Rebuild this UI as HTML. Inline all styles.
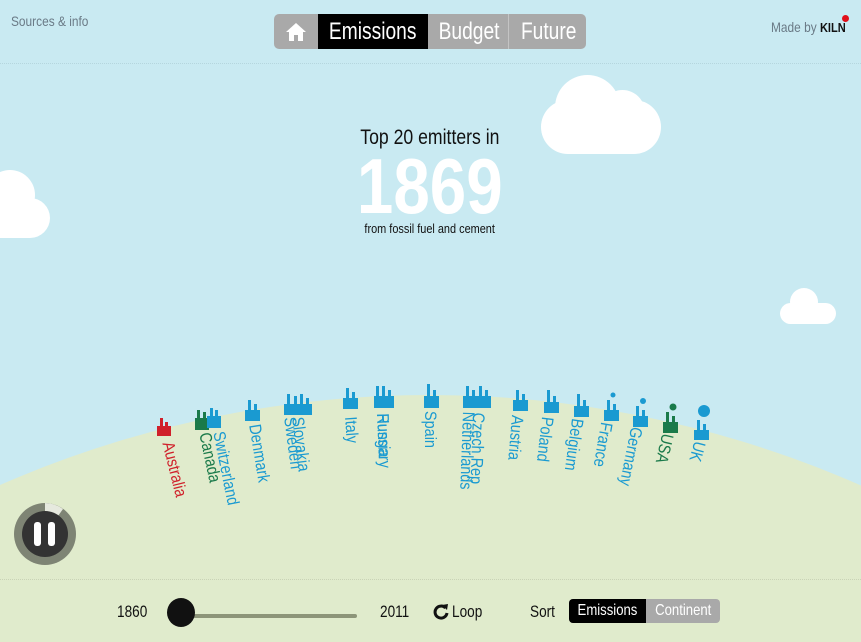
<!DOCTYPE html>
<html style="width:861px;height:642px;overflow:hidden"><head><meta charset="utf-8"><style>
*{margin:0;padding:0;box-sizing:border-box}
body{width:861px;height:642px;overflow:hidden;background:#c9eaf2;position:relative;font-family:"Liberation Sans",sans-serif}
.abs{position:absolute}
.clip{position:absolute;left:0;top:0;width:861px;height:642px;overflow:hidden}
.ground{position:absolute;left:-642px;top:395px;width:2144px;height:2144px;border-radius:50%;background:#e0ebcc}
.nav{position:absolute;left:274px;top:14px;width:312px;height:35px;background:#a9a9a9;border-radius:5px;overflow:hidden;font-size:24px;color:#fff}
.nav div{position:absolute;top:0;height:35px;line-height:35px;text-align:center}
.n{display:inline-block;transform:scaleX(0.8)}
.lab{position:absolute;transform-origin:0 0;font-size:17px;white-space:nowrap;color:#1a9ad1;line-height:17px}
.cloud{position:absolute;background:#fff;border-radius:50%}
</style></head><body>
<div class="clip"><div class="ground"></div></div>
<div class="abs" style="left:0;top:63px;width:861px;border-top:1px dotted #b5d6de"></div>
<div class="abs" style="left:0;top:579px;width:861px;border-top:1px dotted #c9d3b6"></div>
<div class="abs" style="left:0;top:580px;width:861px;height:62px;background:#e0ebcc"></div>
<div class="abs" style="left:11px;top:13px;font-size:14px;color:#6a7a86;transform:scaleX(0.85);transform-origin:0 0">Sources &amp; info</div>
<div class="abs" style="left:771px;top:19px;font-size:14px;color:#6a7a86;transform:scaleX(0.85);transform-origin:0 0">Made by <b style="color:#111;font-size:13px">KILN</b></div>
<div class="abs" style="left:842px;top:15px;width:7px;height:7px;border-radius:50%;background:#e0101a"></div>
<div class="nav">
 <div style="left:0;width:44px"><svg width="22" height="20" viewBox="0 0 22 20" style="margin-top:8px"><path d="M11 1 L1 10 L4 10 L4 19 L9 19 L9 13 L13 13 L13 19 L18 19 L18 10 L21 10 Z" fill="#fff"/></svg></div>
 <div style="left:44px;width:110px;background:#000"><span class="n">Emissions</span></div>
 <div style="left:156px;width:79px;border-right:1px solid #c4c4c4"><span class="n">Budget</span></div>
 <div style="left:237px;width:75px"><span class="n">Future</span></div>
</div>
<div class="cloud" style="left:541px;top:100px;width:120px;height:54px;border-radius:27px"></div>
<div class="cloud" style="left:555px;top:75px;width:65px;height:65px"></div>
<div class="cloud" style="left:600px;top:90px;width:45px;height:45px"></div>
<div class="cloud" style="left:-30px;top:198px;width:80px;height:40px;border-radius:20px"></div>
<div class="cloud" style="left:-15px;top:170px;width:50px;height:50px"></div>
<div class="cloud" style="left:780px;top:303px;width:56px;height:21px;border-radius:11px"></div>
<div class="cloud" style="left:790px;top:288px;width:28px;height:28px"></div>
<div class="abs" style="left:330px;width:200px;top:126px;text-align:center;font-size:21px;color:#111"><span class="n" style="transform:scaleX(0.84)">Top 20 emitters in</span></div>
<div class="abs" style="left:280px;width:300px;top:144px;text-align:center;font-size:78px;font-weight:bold;color:#fff;line-height:84px"><span class="n" style="transform:scaleX(0.84)">1869</span></div>
<div class="abs" style="left:330px;width:200px;top:221px;text-align:center;font-size:13px;color:#111"><span class="n" style="transform:scaleX(0.84)">from fossil fuel and cement</span></div>
<svg class="abs" style="left:0;top:0" width="861" height="642">
<g fill="#1a9ad1">
<g fill="#d0202a"><rect x="157" y="426" width="14" height="10"/><rect x="160" y="418" width="3" height="10"/><rect x="165" y="422" width="3" height="6"/></g>
<g fill="#1a7a4a"><rect x="195" y="418" width="14" height="12"/><rect x="197" y="410" width="3" height="10"/><rect x="203" y="412" width="3" height="8"/></g>
<rect x="207" y="416" width="14" height="12"/><rect x="210" y="408" width="3" height="10"/><rect x="215" y="410" width="3" height="8"/>
<rect x="245" y="410" width="15" height="11"/><rect x="248" y="400" width="3" height="12"/><rect x="254" y="404" width="3" height="8"/>
<rect x="284" y="404" width="28" height="11"/><rect x="287" y="394" width="3" height="12"/><rect x="294" y="396" width="3" height="10"/><rect x="300" y="394" width="3" height="12"/><rect x="306" y="398" width="3" height="8"/>
<rect x="343" y="398" width="15" height="11"/><rect x="346" y="388" width="3" height="12"/><rect x="352" y="392" width="3" height="8"/>
<rect x="374" y="396" width="20" height="12"/><rect x="376" y="386" width="3" height="12"/><rect x="382" y="386" width="3" height="12"/><rect x="388" y="390" width="3" height="8"/>
<rect x="424" y="396" width="15" height="12"/><rect x="427" y="384" width="3" height="14"/><rect x="433" y="390" width="3" height="8"/>
<rect x="463" y="396" width="28" height="12"/><rect x="466" y="386" width="3" height="12"/><rect x="472" y="390" width="3" height="8"/><rect x="479" y="386" width="3" height="12"/><rect x="485" y="390" width="3" height="8"/>
<rect x="513" y="400" width="15" height="11"/><rect x="516" y="390" width="3" height="12"/><rect x="522" y="394" width="3" height="8"/>
<rect x="544" y="402" width="15" height="11"/><rect x="547" y="390" width="3" height="14"/><rect x="553" y="396" width="3" height="8"/>
<rect x="574" y="406" width="15" height="11"/><rect x="577" y="394" width="3" height="14"/><rect x="583" y="400" width="3" height="8"/>
<rect x="604" y="410" width="15" height="11"/><rect x="607" y="400" width="3" height="12"/><rect x="613" y="404" width="3" height="8"/><circle cx="613" cy="395" r="2.5"/>
<rect x="633" y="416" width="15" height="11"/><rect x="636" y="406" width="3" height="12"/><rect x="642" y="410" width="3" height="8"/><circle cx="643" cy="401" r="3"/>
<g fill="#1a7a4a"><rect x="663" y="422" width="15" height="11"/><rect x="666" y="412" width="3" height="12"/><rect x="672" y="416" width="3" height="8"/><circle cx="673" cy="407" r="3.5"/></g>
<rect x="694" y="430" width="15" height="10"/><rect x="697" y="420" width="3" height="12"/><rect x="703" y="424" width="3" height="8"/><circle cx="704" cy="411" r="6"/>
</g>
</svg>
<div class="lab" style="left:176px;top:440px;transform:rotate(76deg) scaleX(0.85);color:#d0202a">Australia</div>
<div class="lab" style="left:213px;top:431px;transform:rotate(78deg) scaleX(0.85);color:#1a7a4a">Canada</div>
<div class="lab" style="left:227px;top:430px;transform:rotate(78.6deg) scaleX(0.85)">Switzerland</div>
<div class="lab" style="left:263px;top:423px;transform:rotate(80.7deg) scaleX(0.85)">Denmark</div>
<div class="lab" style="left:298px;top:416px;transform:rotate(82.5deg) scaleX(0.85)">Sweden</div>
<div class="lab" style="left:306px;top:416px;transform:rotate(83deg) scaleX(0.85)">Slovakia</div>
<div class="lab" style="left:359px;top:416px;transform:rotate(86deg) scaleX(0.85)">Italy</div>
<div class="lab" style="left:391px;top:413px;transform:rotate(87.6deg) scaleX(0.85)">Russia</div>
<div class="lab" style="left:391px;top:413px;transform:rotate(87.6deg) scaleX(0.85)">Hungary</div>
<div class="lab" style="left:439px;top:411px;transform:rotate(90deg) scaleX(0.85)">Spain</div>
<div class="lab" style="left:477px;top:412px;transform:rotate(92deg) scaleX(0.85)">Netherlands</div>
<div class="lab" style="left:487px;top:413px;transform:rotate(92deg) scaleX(0.85)">Czech Rep</div>
<div class="lab" style="left:526px;top:416px;transform:rotate(94.8deg) scaleX(0.85)">Austria</div>
<div class="lab" style="left:556px;top:418px;transform:rotate(96.5deg) scaleX(0.85)">Poland</div>
<div class="lab" style="left:586px;top:420px;transform:rotate(98deg) scaleX(0.85)">Belgium</div>
<div class="lab" style="left:615px;top:424px;transform:rotate(99.7deg) scaleX(0.85)">France</div>
<div class="lab" style="left:645px;top:429px;transform:rotate(101.3deg) scaleX(0.85)">Germany</div>
<div class="lab" style="left:676px;top:436px;transform:rotate(103deg) scaleX(0.85);color:#1a7a4a">USA</div>
<div class="lab" style="left:708px;top:444px;transform:rotate(104.7deg) scaleX(0.85)">UK</div>
<svg class="abs" style="left:13px;top:502px" width="64" height="64">
<circle cx="32" cy="32" r="31" fill="#7e8474"/>
<path d="M32 1 A31 31 0 0 1 50 7 L45 14 A23 23 0 0 0 32 9 Z" fill="#e6e9de"/>
<circle cx="32" cy="32" r="23" fill="#333"/>
<rect x="21" y="20" width="7" height="24" rx="3" fill="#fff"/><rect x="35" y="20" width="7" height="24" rx="3" fill="#fff"/>
</svg>
<div class="abs" style="left:117px;top:602px;font-size:17px;color:#111;transform:scaleX(0.8);transform-origin:0 0">1860</div>
<div class="abs" style="left:190px;top:614px;width:167px;height:4px;background:#8d9579;border-radius:2px"></div>
<div class="abs" style="left:167px;top:598px;width:28px;height:29px;border-radius:50%;background:#111"></div>
<div class="abs" style="left:380px;top:602px;font-size:17px;color:#111;transform:scaleX(0.8);transform-origin:0 0">2011</div>
<svg class="abs" style="left:433px;top:603px" width="16" height="17" viewBox="0 0 16 17"><path d="M12.5 5 A6 6 0 1 0 14 10" fill="none" stroke="#111" stroke-width="3"/><path d="M9 2 L15 1 L14 7 Z" fill="#111"/></svg>
<div class="abs" style="left:452px;top:602px;font-size:17px;color:#111;transform:scaleX(0.8);transform-origin:0 0">Loop</div>
<div class="abs" style="left:530px;top:602px;font-size:17px;color:#111;transform:scaleX(0.8);transform-origin:0 0">Sort</div>
<div class="abs" style="left:569px;top:599px;width:151px;height:24px;background:#a9a9a9;border-radius:4px;overflow:hidden;font-size:16px;color:#fff;line-height:24px">
 <div class="abs" style="left:0;top:0;width:77px;height:24px;background:#000;text-align:center"><span class="n" style="transform:scaleX(0.82)">Emissions</span></div>
 <div class="abs" style="left:77px;top:0;width:74px;height:24px;text-align:center"><span class="n" style="transform:scaleX(0.82)">Continent</span></div>
</div>
</body></html>
